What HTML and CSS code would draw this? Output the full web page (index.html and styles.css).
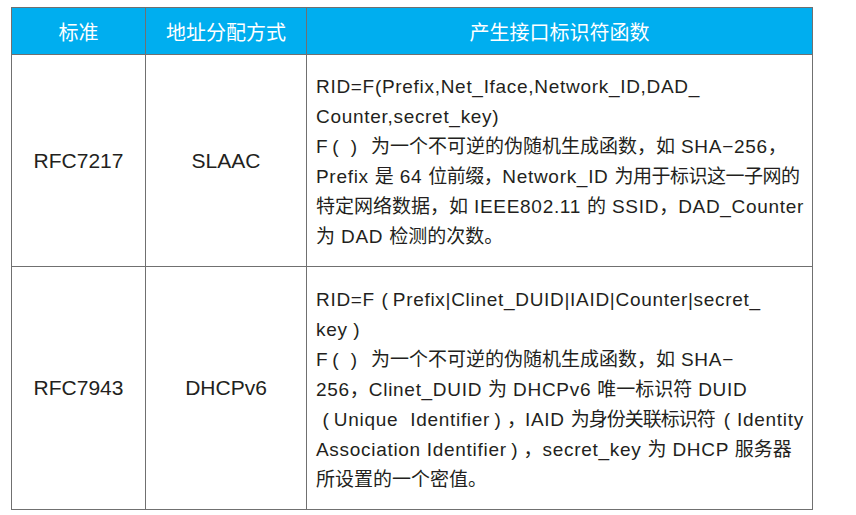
FILE: index.html
```html
<!DOCTYPE html>
<html lang="zh-CN">
<head>
<meta charset="utf-8">
<title>接口标识符生成方式</title>
<link rel="stylesheet" href="styles.css">
</head>
<body>
<div class="page">
  <table class="spec">
    <colgroup>
      <col class="c-std">
      <col class="c-mode">
      <col class="c-fn">
    </colgroup>
    <thead>
      <tr class="head">
        <th>标准</th>
        <th>地址分配方式</th>
        <th>产生接口标识符函数</th>
      </tr>
    </thead>
    <tbody>
      <tr class="r1">
        <td class="key">RFC7217</td>
        <td class="key">SLAAC</td>
        <td class="desc">RID=F(Prefix,Net_Iface,Network_ID,DAD_<br>Counter,secret_key)<br>F<span class="p1">(</span><span class="p2">)</span><span class="zh">为一个不可逆的伪随机生成函数，如</span> SHA−256<span class="zh">，</span><br>Prefix <span class="zh">是</span> 64 <span class="zh tight">位前缀，</span>Network_ID <span class="zh tight">为用于标识这一子网的</span><br><span class="zh">特定网络数据，如</span> IEEE802.11 <span class="zh">的</span> SSID<span class="zh">，</span>DAD_Counter<br><span class="zh">为</span> DAD <span class="zh">检测的次数。</span></td>
      </tr>
      <tr class="r2">
        <td class="key">RFC7943</td>
        <td class="key">DHCPv6</td>
        <td class="desc">RID=F<span class="po">(</span>Prefix|Clinet_DUID|IAID|Counter|secret_<br>key<span class="pc">)</span><br>F<span class="p1">(</span><span class="p2">)</span><span class="zh">为一个不可逆的伪随机生成函数，如</span> SHA−<br>256<span class="zh">，</span>Clinet_DUID <span class="zh">为</span> DHCPv6 <span class="zh">唯一标识符</span> DUID<br><span class="po">(</span>Unique&nbsp; Identifier<span class="pc pcw">)</span><span class="zh tighter">，</span>IAID <span class="zh tighter">为身份关联标识符</span><span class="po pow">(</span>Identity<br>Association Identifier<span class="pc pcw">)</span><span class="zh">，</span>secret_key <span class="zh">为</span> DHCP <span class="zh">服务器</span><br><span class="zh">所设置的一个密值。</span></td>
      </tr>
    </tbody>
  </table>
</div>
</body>
</html>
```

FILE: styles.css
```css
html, body {
  margin: 0;
  padding: 0;
  background: #ffffff;
}

.page {
  padding: 7px 0 0 11px;
}

.spec {
  width: 801px;
  border-collapse: collapse;
  table-layout: fixed;
  font-family: "Liberation Sans", Arial, "Noto Sans CJK SC", sans-serif;
  color: #231f20;
}

.c-std { width: 134px; }
.c-mode { width: 161px; }
.c-fn { width: 506px; }

.spec th,
.spec td {
  border: 1.5px solid #707070;
  padding: 0;
}

.head th {
  height: 46px;
  background: #00aeef;
  color: #ffffff;
  font-weight: normal;
  font-size: 20px;
  text-align: center;
  vertical-align: middle;
  font-family: "Noto Sans CJK SC", sans-serif;
}

.r1 td { height: 208px; }
.r2 td { height: 239px; }

.key {
  text-align: center;
  vertical-align: middle;
  font-size: 21px;
}

.spec .desc {
  vertical-align: middle;
  font-size: 19px;
  line-height: 30px;
  letter-spacing: 0.7px;
  white-space: nowrap;
  padding: 3px 0 0 9px;
}

.zh {
  letter-spacing: 0;
}

.zh.tight {
  letter-spacing: -0.5px;
}

.zh.tighter {
  letter-spacing: -1px;
}

.p1, .p2, .po, .pc {
  letter-spacing: 0;
}

.p1 { margin: 0 12px 0 4px; }
.p2 { margin: 0 14px 0 0; }

.po { margin: 0 5px 0 6.5px; }
.pow { margin: 0 7px 0 9px; }

.pc { margin: 0 6px 0 5.5px; }
.pcw { margin: 0 6px 0 4.5px; }
```
